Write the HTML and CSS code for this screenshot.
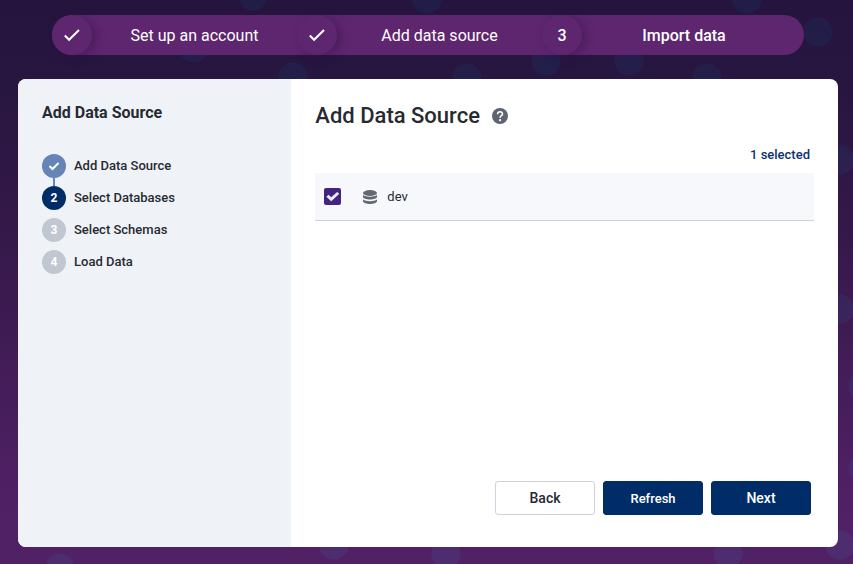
FILE: index.html
```html
<!DOCTYPE html>
<html lang="en">
<head>
<meta charset="utf-8">
<meta name="viewport" content="width=device-width, initial-scale=1">
<title>Add Data Source</title>
<link rel="stylesheet" href="styles.css">
</head>
<body>
<svg class="backdrop" viewBox="0 0 853 564" preserveAspectRatio="xMidYMid slice" aria-hidden="true">
  <defs><linearGradient id="dots" gradientUnits="userSpaceOnUse" x1="0" y1="0" x2="0" y2="564"><stop offset="0" stop-color="#123c70"/><stop offset="1" stop-color="#3f5c9a"/></linearGradient></defs>
  <g fill="url(#dots)">
  <circle cx="253" cy="-4" r="14.500"/><circle cx="194" cy="48" r="14.500"/><circle cx="427" cy="-1" r="14.500"/>
  <circle cx="293" cy="77" r="14.500"/><circle cx="467" cy="78" r="14.500"/><circle cx="546" cy="61" r="14.500"/>
  <circle cx="629" cy="61" r="14.500"/><circle cx="707" cy="78" r="14.500"/><circle cx="747" cy="-1" r="14.500"/>
  <circle cx="818" cy="32" r="14.500"/><circle cx="840" cy="160" r="14.500"/><circle cx="840" cy="309" r="14.500"/>
  <circle cx="863" cy="386" r="14.500"/><circle cx="863" cy="468" r="14.500"/><circle cx="840" cy="545" r="14.500"/>
  <circle cx="728" cy="553" r="14.500"/><circle cx="60" cy="568" r="14.500"/><circle cx="334" cy="545" r="14.500"/>
  <circle cx="446" cy="554" r="14.500"/>
  </g>
</svg>
<div class="page">
  <ol class="progress">
    <li class="stage"><span class="stage-dot"><svg width="18" height="14" viewBox="0 0 18 14"><path d="M1.800 7.500l4.300 4.300L16 2"/></svg></span><span class="stage-name">Set up an account</span></li>
    <li class="stage"><span class="stage-dot"><svg width="18" height="14" viewBox="0 0 18 14"><path d="M1.800 7.500l4.300 4.300L16 2"/></svg></span><span class="stage-name">Add data source</span></li>
    <li class="stage stage-current"><span class="stage-dot">3</span><span class="stage-name">Import data</span></li>
  </ol>
  <div class="card">
    <aside class="sidebar">
      <h2>Add Data Source</h2>
      <ol class="steps">
        <li class="step done"><span class="step-dot"><svg width="12" height="10" viewBox="0 0 12 10"><path d="M1.500 5l3 3 6-6"/></svg></span>Add Data Source</li>
        <li class="step active"><span class="step-dot">2</span>Select Databases</li>
        <li class="step"><span class="step-dot">3</span>Select Schemas</li>
        <li class="step"><span class="step-dot">4</span>Load Data</li>
      </ol>
    </aside>
    <main class="content">
      <header class="heading">
        <h1>Add Data Source</h1>
        <svg class="help" width="16" height="16" viewBox="0 0 16 16" role="img" aria-label="Help"><circle cx="8" cy="8" r="8"/><path d="M5.600 6.200C5.600 3 10.500 3 10.500 5.900c0 1.900-2.400 1.800-2.400 3.900"/><circle class="help-dot" cx="8.100" cy="12.200" r="1.100"/></svg>
      </header>
      <p class="count">1 selected</p>
      <ul class="databases">
        <li><label class="database">
          <input type="checkbox" checked>
          <svg class="db-icon" width="16" height="16" viewBox="0 0 16 16" aria-hidden="true"><ellipse cx="8" cy="4" rx="7" ry="3"/><path d="M1 6c3 2.300 11 2.300 14 0v2c0 3.300-14 3.300-14 0z"/><path d="M1 10.500c3 2.300 11 2.300 14 0V12c0 4-14 4-14 0z"/></svg>
          <span>dev</span>
        </label></li>
      </ul>
      <footer class="actions">
        <button type="button" class="btn secondary">Back</button>
        <button type="button" class="btn refresh">Refresh</button>
        <button type="button" class="btn">Next</button>
      </footer>
    </main>
  </div>
</div>
</body>
</html>
```
FILE: styles.css
```css
* {
  box-sizing: border-box;
}

body {
  margin: 0;
  min-height: 100vh;
  font-family: Roboto, "Liberation Sans", sans-serif;
  font-size: 13px;
  color: #272a31;
  background: linear-gradient(#25153e 0, #27163f 15%, #341849 40%, #4e2063 85%, #512166);
}

h1, h2, p, ol, ul {
  margin: 0;
  padding: 0;
}

ol, ul {
  list-style: none;
}

.backdrop {
  position: absolute;
  inset: 0;
  width: 100%;
  height: 100%;
  fill-opacity: 0.2;
}

.page {
  position: relative;
  display: flex;
  flex-direction: column;
  gap: 24px;
  min-height: 100vh;
  padding: 15px 15px 17px 18px;
}

.progress {
  display: grid;
  grid-template-columns: 245fr 245fr 262fr;
  margin: 0 34px;
  border-radius: 20px;
  background: #5e266f;
  color: #fff;
  font-size: 16px;
}

.stage {
  display: flex;
  align-items: center;
}

.stage-dot {
  display: flex;
  align-items: center;
  justify-content: center;
  width: 40px;
  height: 40px;
  border-radius: 50%;
  background: #5e266f;
  box-shadow: 4px 2px 10px rgba(45, 15, 65, 0.4);
}

.stage-dot path,
.step-dot path {
  fill: none;
  stroke: #fff;
  stroke-width: 2;
}

.stage-name {
  flex: 1;
  text-align: center;
}

.stage-current {
  padding-right: 18px;
  font-weight: 500;
}

.card {
  flex: 1;
  display: grid;
  grid-template-columns: 1fr 2fr;
  border-radius: 8px;
  overflow: hidden;
  background: #fff;
}

.sidebar {
  padding: 24px;
  background: #eff3f8;
}

.sidebar h2 {
  font-size: 16px;
  line-height: 20px;
  font-weight: 700;
}

.steps {
  display: grid;
  gap: 8px;
  margin-top: 31px;
}

.step {
  display: flex;
  align-items: center;
  gap: 8px;
  line-height: 16px;
  font-weight: 500;
}

.step-dot {
  position: relative;
  display: flex;
  align-items: center;
  justify-content: center;
  width: 24px;
  height: 24px;
  border-radius: 50%;
  background: #c1c7d0;
  color: #fff;
  font-size: 12px;
  font-weight: 700;
}

.active .step-dot {
  background: #002d68;
}

.done .step-dot {
  background: #6485b5;
}

.done .step-dot::after {
  content: "";
  position: absolute;
  top: 100%;
  left: 11px;
  width: 2px;
  height: 8px;
  background: #6485b5;
}

.content {
  display: flex;
  flex-direction: column;
  padding: 24px 24px 32px;
}

.heading {
  display: flex;
  align-items: center;
  gap: 12px;
}

.heading h1 {
  font-size: 22px;
  line-height: 26px;
  font-weight: 500;
}

.help {
  fill: #5e6570;
}

.help path {
  fill: none;
  stroke: #fff;
  stroke-width: 1.6;
}

.help .help-dot {
  fill: #fff;
}

.count {
  margin: 18px 4px 10px;
  line-height: 16px;
  text-align: right;
  font-weight: 500;
  color: #0b3370;
}

.database {
  display: flex;
  align-items: center;
  height: 48px;
  padding: 0 9px;
  border-bottom: 1px solid #cdd0d5;
  background: #f7f8fb;
}

.database input {
  appearance: none;
  display: grid;
  place-items: center;
  width: 17px;
  height: 17px;
  margin: 0 21px 0 0;
  border-radius: 2px;
}

.database input:checked {
  background: #432580;
}

.database input:checked::before {
  content: "";
  width: 13px;
  height: 11px;
  background: #e9edf9;
  clip-path: polygon(0 52%, 17% 34%, 38% 56%, 83% 8%, 100% 25%, 38% 94%);
}

.db-icon {
  margin-right: 9px;
  fill: #626973;
}

.actions {
  display: flex;
  justify-content: flex-end;
  gap: 8px;
  margin: auto 3px 0 0;
}

.btn {
  width: 100px;
  height: 34px;
  padding: 0;
  border: 1px solid #002d68;
  border-radius: 3px;
  background: #002d68;
  color: #fff;
  font: 500 14px Roboto, "Liberation Sans", sans-serif;
}

.btn.refresh {
  font-size: 13px;
}

.btn.secondary {
  border-color: #d0d3dc;
  background: #fff;
  color: #272a31;
}
```
